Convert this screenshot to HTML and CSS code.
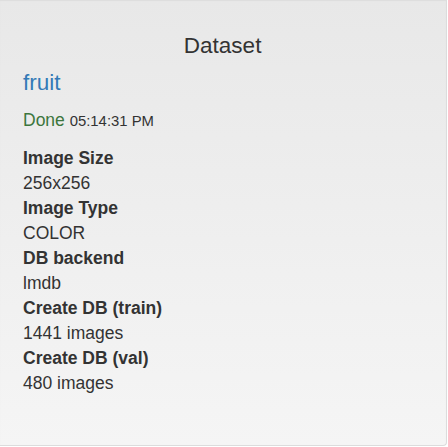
FILE: index.html
```html
<!DOCTYPE html>
<html>
<head>
<meta charset="utf-8">
<link rel="stylesheet" href="styles.css">
</head>
<body>
<div class="well">
  <h4 class="title">Dataset</h4>
  <h4 class="name"><a href="#">fruit</a></h4>
  <p class="status">Done <small>05:14:31 PM</small></p>
  <dl class="info">
    <dt>Image Size</dt>
    <dd>256x256</dd>
    <dt>Image Type</dt>
    <dd>COLOR</dd>
    <dt>DB backend</dt>
    <dd>lmdb</dd>
    <dt>Create DB (train)</dt>
    <dd>1441 images</dd>
    <dt>Create DB (val)</dt>
    <dd>480 images</dd>
  </dl>
</div>
</body>
</html>
```
FILE: styles.css
```css
html, body {
  margin: 0;
  padding: 0;
  background: #fff;
}
body {
  font-family: "Liberation Sans", Arial, sans-serif;
  font-size: 17.5px;
  line-height: 25px;
  color: #333;
}
.well {
  box-sizing: border-box;
  width: 447px;
  height: 446px;
  padding: 34px 23.75px 0 23px;
  background: linear-gradient(to bottom, #e8e8e8 0, #f5f5f5 100%);
  border-right: 1px solid #dcdcdc;
  border-bottom: 1px solid #dcdcdc;
  border-bottom-right-radius: 4px;
  box-shadow: inset 0 1px 1px rgba(0,0,0,.05);
}
h4 {
  font-size: 22.5px;
  line-height: 24.75px;
  font-weight: 500;
  margin: 0;
}
.title {
  text-align: center;
  color: #333;
}
.name {
  margin-top: 12px;
}
.name a {
  color: #337ab7;
  text-decoration: none;
}
.status {
  margin: 12.5px 0 0;
  color: #3c763d;
}
.status small {
  font-size: 85%;
  color: #333;
}
.info {
  margin: 12px 0 0;
}
.info dt {
  font-weight: bold;
}
.info dd {
  margin: 0;
}
```
